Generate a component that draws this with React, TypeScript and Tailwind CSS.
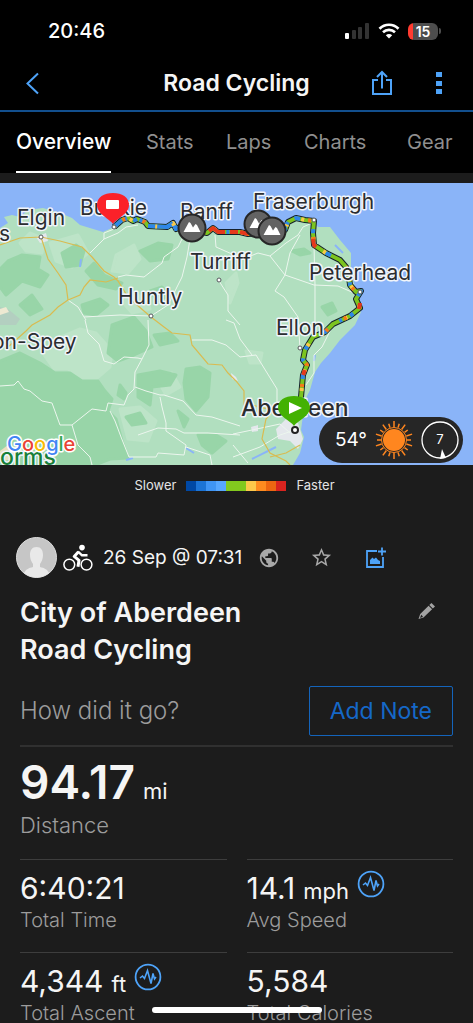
import React from "react";
import { MdPublic, MdStarBorder } from "react-icons/md";

const TABS = ["Overview", "Stats", "Laps", "Charts", "Gear"];

const LEGEND = [
  "bg-[#0048a4]",
  "bg-[#1c74d6]",
  "bg-[#3f95f5]",
  "bg-[#57a7ff]",
  "bg-[#82c91e]",
  "bg-[#82c91e]",
  "bg-[#fcc84a]",
  "bg-[#fd8b1f]",
  "bg-[#ec6611]",
  "bg-[#d9241f]",
];

const STATS = [
  { label: "Total Time", value: "6:40:21" },
  { label: "Avg Speed", value: "14.1", unit: "mph", insight: true },
  { label: "Total Ascent", value: "4,344", unit: "ft", insight: true },
  { label: "Total Calories", value: "5,584" },
];

const ROUTE =
  "M114 44 L122 37 L128 35 L133 38 L137 36 L145 39 L148 43 L167 44 L173 40 L176 46 L182 43 L192 46 L207 50 L213 45 L218 49 L240 49 L248 51 L266 50 L285 47 L288 39 L296 35 L305 37 L314 38 L313 50 L314 62 L326 70 L340 77 L346 84 L349 94 L350 102 L356 109 L361 108 L356 116 L360 125 L350 133 L333 141 L325 149 L313 154 L305 167 L303 177 L307 182 L303 192 L301 214 L300 225";

const FOREST = [
  "M0 178 L20 170 L40 180 L55 190 L70 190 L82 198 L98 198 L105 208 L112 216 L108 228 L116 236 L122 258 L128 275 L110 276 L95 282 L0 282Z",
  "M8 78 L22 72 L40 74 L38 86 L48 92 L40 104 L22 98 L6 112 L0 104 L0 86Z",
  "M62 70 L76 62 L84 68 L80 82 L66 84Z",
  "M86 88 L94 80 L104 92 L122 100 L116 106 L98 102Z",
  "M140 68 L158 60 L172 62 L168 76 L150 78Z",
  "M82 122 L100 116 L108 122 L96 132 L84 130Z",
  "M112 142 L134 134 L146 148 L152 164 L134 172 L118 178 L108 170Z",
  "M154 152 L170 150 L178 158 L160 162Z",
  "M138 192 L160 188 L176 192 L170 202 L152 204 L150 222 L138 214Z",
  "M186 186 L200 184 L210 190 L208 214 L196 228 L186 216 L184 200Z",
  "M120 202 L126 210 L124 216 L118 212Z",
  "M126 234 L140 230 L146 240 L132 242Z",
  "M198 252 L216 252 L226 258 L212 270 L202 262Z",
  "M178 228 L188 236 L184 244Z",
  "M150 108 L162 104 L170 112 L158 118Z",
  "M292 68 L304 66 L310 70 L300 72Z",
  "M322 124 L332 120 L336 128 L328 132Z",
  "M20 122 L32 112 L42 126 L30 132Z",
];

const PALE = [
  "M52 158 L80 146 L96 150 L112 168 L110 184 L96 196 L82 196 L68 186 L54 186 L44 172Z",
  "M50 60 L78 52 L88 70 L72 84 L56 78Z",
  "M20 60 L30 50 L44 56 L42 70 L26 68Z",
  "M120 226 L140 224 L156 238 L148 258 L128 256Z",
  "M156 194 L172 190 L180 204 L166 212Z",
  "M116 72 L134 62 L140 76 L128 90 L112 88Z",
  "M238 100 L236 90 L226 100 L230 120Z",
  "M120 116 L146 112 L150 126 L132 130Z",
  "M246 168 L262 170 L260 180 L250 180Z",
];

const MINOR_ROADS = [
  "M0 203 L14 202 L18 198 L24 206 L30 208 L42 218 L52 220 L60 242 L72 242 L82 234 L92 226 L106 228 L108 220 L124 222 L128 212 L134 206 L135 189 L142 176 L149 162 L148 137",
  "M85 137 L88 150 L99 161 L104 178 L114 181 L124 174 L138 175 L142 176",
  "M135 204 L146 208 L160 212 L164 212 L183 218 L196 232 L212 234 L240 243",
  "M72 242 L78 262 L90 274 L92 282",
  "M110 228 L115 238 L121 254 L129 274 L156 274 L158 270 L184 272 L186 262 L166 248 L166 240 L162 224 L160 214",
  "M138 252 L158 245 L176 246 L184 250 L208 250 L240 252",
  "M186 264 L210 272 L212 282",
  "M68 117 L78 124 L84 134 L86 137",
  "M84 134 L120 132 L151 133 L168 122 L182 94 L187 74 L190 56",
  "M118 94 L126 92 L144 94 L162 80 L164 74 L178 64 L184 52",
  "M114 46 L104 50 L104 56 L90 70",
  "M104 56 L118 50 L126 44 L138 42",
  "M219 98 L228 112 L228 128 L240 142",
  "M215 52 L216 64 L232 71 L248 74 L258 70 L270 73 L285 92 L275 108 L284 114 L298 134 L300 166",
  "M270 73 L286 60 L298 52 L303 44 L312 40",
  "M285 92 L290 70 L300 52",
  "M285 92 L314 102 L338 103 L354 110",
  "M314 62 L315 102 L315 142",
  "M192 157 L212 157 L226 162 L240 174 L256 172 L277 206 L277 224",
  "M226 137 L234 140 L240 156 L252 172",
  "M333 142 L322 164 L314 172 L314 190 L306 202",
  "M233 251 L252 247 L280 241 L290 250",
  "M233 274 L260 264 L280 252 L292 248",
  "M233 262 L248 280",
];

const MAIN_ROADS = [
  "M0 62 L20 55 L41 54 L60 58 L82 64 L92 74 L104 88 L114 94 L118 98 L128 114 L144 128 L151 134 L164 144 L172 150 L190 152 L192 162 L208 181 L222 182 L228 190 L236 198 L244 208 L244 222 L260 230",
  "M41 54 L48 76 L58 90 L66 102 L68 117 L58 124 L50 132 L32 142 L26 148 L8 164",
  "M68 117 L80 112 L84 104 L90 97 L106 99 L118 95",
  "M275 225 L266 236 L262 256 L270 270 L286 278 L290 282",
  "M270 274 L286 270 L300 262",
  "M252 222 L268 226 L280 220",
];

const TOWNS = [
  [41, 54],
  [114, 44],
  [219, 97],
  [151, 133],
  [314, 37],
  [360, 109],
  [300, 165],
];

const LABELS = [
  { text: "Elgin", x: 17, y: 42 },
  { text: "s", x: -1, y: 58 },
  { text: "Buckie", x: 80, y: 32 },
  { text: "Banff", x: 180, y: 36 },
  { text: "Fraserburgh", x: 253, y: 26 },
  { text: "Turriff", x: 190, y: 86 },
  { text: "Peterhead", x: 309, y: 97 },
  { text: "Huntly", x: 118, y: 121 },
  { text: "Ellon", x: 276, y: 152 },
  { text: "on-Spey", x: -8, y: 166 },
];

function SummitMarker({ x, y }: { x: number; y: number }) {
  return (
    <g transform={`translate(${x} ${y})`}>
      <circle r="13.5" fill="#636363" stroke="#262626" strokeWidth="2" />
      <path d="M-8.5 4 L-3 -6 L-1.5 -5 L1 -0.5 L3.5 -4 L5 -3 L8.5 4Z" fill="#fff" />
    </g>
  );
}

function RouteMap() {
  return (
    <svg
      viewBox="0 0 473 282"
      preserveAspectRatio="xMidYMid slice"
      className="block h-[282px] w-full font-[Inter,sans-serif]"
      role="img"
      aria-label="Route map"
    >
      <rect width="473" height="282" fill="#8ab4f8" />
      <path
        d="M0 45 L8 40 L4 34 L12 32 L20 34 L28 27 L43 25 L60 30 L72 35 L80 42 L103 49 L114 44 L128 34 L145 35 L150 40 L172 42 L190 40 L205 46 L240 47 L248 50 L283 46 L289 35 L313 36 L318 44 L330 44 L340 57 L351 70 L351 89 L355 104 L362 109 L358 118 L361 129 L355 142 L340 157 L330 170 L321 180 L315 189 L310 207 L305 217 L301 247 L304 254 L300 270 L293 282 L0 282Z"
        fill="#b1dfbf"
      />
      <g fill="#bde4c8" stroke="#bde4c8" strokeWidth="3" strokeLinejoin="round">
        {PALE.map((d) => (
          <path key={d} d={d} />
        ))}
      </g>
      <g fill="#98d5a8" stroke="#98d5a8" strokeWidth="3" strokeLinejoin="round">
        {FOREST.map((d) => (
          <path key={d} d={d} />
        ))}
      </g>
      <path d="M0 124 L8 126 L20 136 L16 142 L0 142Z" fill="#b3cfc0" />
      <path d="M0 126 L6 124 L9 129 L0 132Z" fill="#eee9d2" />
      <path d="M0 268 L8 262 L22 266 L20 276 L0 278Z" fill="#eadfc0" />
      <path
        d="M335 62 L343 70 M315 172 L314 178 M252 276 L276 264 M186 265 L194 270 M126 277 L133 275 M81 76 L80 84"
        stroke="#8ab4f8"
        strokeWidth="2"
      />
      <path
        d="M36 54 L46 50 L48 58 L40 60Z M276 246 L286 236 L298 240 L303 256 L298 266 L290 258 L278 256Z M251 244 L258 242 L258 248 L252 249Z M231 190 L236 194 L238 198 L232 196Z"
        fill="#e4e8ec"
      />
      <g fill="none" stroke="#ecf6ee" strokeWidth="1">
        {MINOR_ROADS.map((d) => (
          <path key={d} d={d} />
        ))}
      </g>
      <g fill="none" stroke="#d9bb50" strokeWidth="1.2">
        {MAIN_ROADS.map((d) => (
          <path key={d} d={d} />
        ))}
      </g>

      {/* pace-coloured track: one base line with the other bands dashed over it */}
      <g fill="none" strokeLinejoin="round">
        <path d={ROUTE} stroke="#15202b" strokeWidth="6" />
        <path d={ROUTE} stroke="#7cc41f" strokeWidth="4" />
        <path
          d="M114 44 L122 37 M133 38 L137 36 M148 43 L167 44 L173 40 L176 46 L182 43 M283 47 L288 39"
          stroke="#2f87e8"
          strokeWidth="4"
        />
        <path d={ROUTE} stroke="#2f87e8" strokeWidth="4" strokeDasharray="4 9 3 14 6 22" />
        <path d={ROUTE} stroke="#fcc84a" strokeWidth="4" strokeDasharray="2 17 3 26" />
        <path d={ROUTE} stroke="#f4791a" strokeWidth="4" strokeDasharray="0 11 3 19 3 33" />
        <path
          d="M209 48 L213 45 L218 49 L225 49 M230 49 L238 49 M240 49 L248 51 M313 56 L314 62 L316 64 M360 120 L359 126 M305 187 L303 192"
          stroke="#e5391c"
          strokeWidth="4"
        />
      </g>

      <g
        fill="#2b2d31"
        stroke="#f1f5fa"
        strokeWidth="3"
        strokeLinejoin="round"
        paintOrder="stroke"
        fontSize="21"
      >
        {LABELS.map((l) => (
          <text key={l.text} x={l.x} y={l.y}>
            {l.text}
          </text>
        ))}
        <text x="241" y="233" fontSize="23" fontWeight="500">
          Aberdeen
        </text>
        <text x="0" y="282" fontSize="23" fontWeight="500" fill="#188038">
          orms
        </text>
      </g>

      <g fill="#fff" stroke="#55585c" strokeWidth="1">
        {TOWNS.map(([x, y]) => (
          <circle key={x} cx={x} cy={y} r="2" />
        ))}
        <circle cx="295" cy="247" r="3" stroke="#222" strokeWidth="2" />
      </g>

      <SummitMarker x={192} y={45} />
      <SummitMarker x={258} y={41} />
      <SummitMarker x={272} y={48} />

      {/* finish and start pins */}
      <path d="M113 41 C110 36 97 31 97 22 C97 14 104 10 113 10 C122 10 129 14 129 22 C129 31 116 36 113 41Z" fill="#fb2129" />
      <rect x="106" y="17" width="13" height="9" rx="1" fill="#fff" />
      <path d="M294 243 C291 238 278 233 278 225 C278 217 285 213 294 213 C303 213 310 217 310 225 C310 233 297 238 294 243Z" fill="#43b102" />
      <path d="M289 219 L302 225 L289 231Z" fill="#fff" />

      <text x="7" y="268" fontSize="20" fontWeight="500" stroke="#fff" strokeWidth="3" paintOrder="stroke" strokeLinejoin="round">
        <tspan fill="#4285f4">G</tspan>
        <tspan fill="#ea4335">o</tspan>
        <tspan fill="#fbbc05">o</tspan>
        <tspan fill="#4285f4">g</tspan>
        <tspan fill="#34a853">l</tspan>
        <tspan fill="#ea4335">e</tspan>
      </text>
    </svg>
  );
}

function SunIcon() {
  const rays = Array.from({ length: 20 }, (_, i) => i * 18);
  return (
    <svg width="38" height="38" viewBox="-19 -19 38 38" aria-hidden="true">
      <circle r="11" fill="#ff861f" />
      <circle r="12.5" fill="none" stroke="#ff861f" strokeWidth="1" />
      {rays.map((deg, i) => (
        <path
          key={deg}
          d={i % 2 ? "M0 -13 V-17" : "M0 -13 V-19"}
          stroke="#ff861f"
          strokeWidth="1.5"
          transform={`rotate(${deg})`}
        />
      ))}
    </svg>
  );
}

function WeatherPill() {
  return (
    <div className="absolute right-2.5 bottom-0.5 flex h-[46px] items-center gap-2 rounded-full bg-[#262626] pr-1 pl-4 text-white">
      <span className="text-[19px]">54°</span>
      <SunIcon />
      <svg
        width="38"
        height="38"
        viewBox="0 0 38 38"
        className="font-[Inter,sans-serif]"
        role="img"
        aria-label="Wind 7"
      >
        <circle cx="19" cy="19" r="18" fill="none" stroke="#fff" strokeWidth="1.3" />
        <path d="M21 28 L25 37 L19 38Z" fill="#fff" />
        <text x="19" y="23" fontSize="13" textAnchor="middle" fill="#fff">
          7
        </text>
      </svg>
    </div>
  );
}

function CyclistIcon() {
  return (
    <svg width="30" height="28" viewBox="0 0 30 28" fill="none" stroke="#fff" aria-hidden="true">
      <circle cx="6.3" cy="20.6" r="5.4" strokeWidth="1.5" />
      <circle cx="23.5" cy="20.6" r="5.4" strokeWidth="1.5" />
      <circle cx="19" cy="3.6" r="2.8" fill="#fff" stroke="none" />
      <path d="M15.5 7.8 L11.2 12.4 L16 16.3 L15 22.8" strokeWidth="3" strokeLinejoin="round" />
      <path d="M15 7.5 L19 11.3 H24.5" strokeWidth="2.4" strokeLinejoin="round" />
    </svg>
  );
}

function InsightIcon() {
  return (
    <svg width="28" height="28" viewBox="0 0 28 28" fill="none" stroke="#4ea3f8" aria-hidden="true">
      <circle cx="14" cy="14" r="12.4" strokeWidth="1.8" />
      <path d="M6 15 L8.5 13 L10.5 15.5 L13.5 7.5 L17 20.5 L19 10.5 L20.5 16 L22 14" strokeWidth="1.6" />
    </svg>
  );
}

function StatusBar() {
  return (
    <div className="flex h-[58px] items-center justify-between pt-1 pr-8 pl-12 text-white">
      <span className="text-xl font-medium">20:46</span>
      <div className="flex items-center gap-2">
        <svg width="25" height="16" viewBox="0 0 25 16" aria-hidden="true">
          <rect x="0" y="10" width="4" height="6" rx="1" fill="#fff" />
          <rect x="7" y="7" width="4" height="9" rx="1" fill="#333" />
          <rect x="13" y="4" width="4" height="12" rx="1" fill="#333" />
          <rect x="20" y="0" width="4" height="16" rx="1" fill="#333" />
        </svg>
        <svg width="22" height="16" viewBox="0 0 22 16" fill="none" stroke="#fff" aria-hidden="true">
          <path d="M1.5 5.8 C6.8 0.4 15.2 0.4 20.5 5.8" strokeWidth="2.7" />
          <path d="M5 9.3 C8.4 6 13.6 6 17 9.3" strokeWidth="2.6" />
          <path d="M11 15.5 L7.8 12.2 C9.6 10.5 12.4 10.5 14.2 12.2Z" fill="#fff" stroke="none" />
        </svg>
        <div className="flex items-center">
          <div className="h-[17px] w-[30px] overflow-hidden rounded-md bg-[linear-gradient(to_right,#ff3b30_5px,#4d4d4d_5px)] text-center text-sm leading-[17px] font-semibold">
            15
          </div>
          <span className="ml-px h-1.5 w-0.5 rounded-r-full bg-[#4d4d4d]" />
        </div>
      </div>
    </div>
  );
}

export default function App() {
  return (
    <div className="flex h-screen flex-col overflow-hidden bg-[#1c1c1c] font-[Inter,sans-serif] text-[#f5f5f5]">
      <header className="bg-black">
        <StatusBar />

        {/* Title bar */}
        <div className="flex h-[54px] items-center border-b-2 border-[#124f8e] px-6 pb-0.5 text-[#4ea3f8]">
          <div className="flex flex-1">
            <button type="button" aria-label="Back">
              <svg width="16" height="24" viewBox="0 0 16 24" fill="none" stroke="currentColor" strokeWidth="2">
                <path d="M14 2.5 L3.5 12.5 L14 22.5" />
              </svg>
            </button>
          </div>
          <h1 className="text-[23px] font-semibold text-[#f5f5f5]">Road Cycling</h1>
          <div className="flex flex-1 items-center justify-end gap-9">
            <button type="button" aria-label="Share">
              <svg width="22" height="26" viewBox="0 0 22 26" fill="none" stroke="currentColor" strokeWidth="2">
                <path d="M7 10 H2 V24 H20 V10 H15 M11 18.5 V2.5 M6 7 L11 2 L16 7" />
              </svg>
            </button>
            <button type="button" aria-label="More">
              <svg width="20" height="24" viewBox="0 0 20 24" fill="currentColor">
                <path d="M7 1 h6 v5 h-6Z M7 10 h6 v5 h-6Z M7 18 h6 v5 h-6Z" />
              </svg>
            </button>
          </div>
        </div>

        {/* Tabs */}
        <nav className="px-4" aria-label="Activity sections">
          <ul className="grid h-[61px] grid-cols-[130fr_80fr_78fr_103fr_50fr] text-xl">
            {TABS.map((tab, i) => (
              <li key={tab} className="flex">
                <a
                  href={`#${tab.toLowerCase()}`}
                  className={`flex items-center border-b-2 ${
                    i === 0
                      ? "border-white text-[21px] font-medium text-white"
                      : "border-transparent text-[#8f8f8f]"
                  }`}
                  aria-current={i === 0 ? "page" : undefined}
                >
                  {tab}
                </a>
              </li>
            ))}
          </ul>
        </nav>
      </header>

      <main>
        <div className="relative mt-2.5">
          <RouteMap />
          <WeatherPill />
        </div>

        {/* Pace legend */}
        <div className="flex h-[42px] items-center justify-center gap-2.5 pr-1 text-[13px] text-[#e4e4e4]">
          <span>Slower</span>
          <div className="flex h-2.5">
            {LEGEND.map((color, i) => (
              <span key={i} className={`w-2.5 ${color}`} />
            ))}
          </div>
          <span>Faster</span>
        </div>

        {/* Activity info */}
        <div className="mt-7 flex h-[45px] items-center px-4">
          <svg width="41" height="41" viewBox="0 0 41 41" aria-hidden="true">
            <circle cx="20.5" cy="20.5" r="20" fill="#c6c6c6" stroke="#dcdcdc" />
            <path d="M20.5 10 C25 10 27 13 27 18 C27 22 25.5 25 24 27 V30 C28 31 31 32 33 36 A20 20 0 0 1 8 36 C10 32 13 31 17 30 V27 C15.5 25 14 22 14 18 C14 13 16 10 20.5 10Z" fill="#e9e9e9" />
          </svg>
          <span className="ml-1.5">
            <CyclistIcon />
          </span>
          <span className="ml-2.5 pt-0.5 text-[19px]">26 Sep @ 07:31</span>
          <button type="button" className="ml-4 text-[#a8a8a8]" aria-label="Privacy">
            <MdPublic size={22} />
          </button>
          <button type="button" className="ml-[30px] text-[#a8a8a8]" aria-label="Favourite">
            <MdStarBorder size={23} />
          </button>
          <button type="button" className="ml-8 text-[#4ea3f8]" aria-label="Add photo">
            <svg width="22" height="22" viewBox="0 0 22 22" fill="none" stroke="currentColor" strokeWidth="1.8">
              <path d="M12 4 H2 V20 H18 V10 M17 0.5 V8.5 M13 4.5 H21" />
              <path d="M5 17 V13 L7.5 10.5 L9 12 L11 10.5 L13 13 L15 14 V17Z" fill="currentColor" stroke="none" />
            </svg>
          </button>
        </div>

        <section className="px-5">
          <div className="mt-3.5 flex items-start justify-between pr-4">
            <h2 className="w-64 text-[27px] leading-[37px] font-semibold">
              City of Aberdeen Road Cycling
            </h2>
            <button type="button" className="mt-2 text-[#a3a3a3]" aria-label="Edit name">
              <svg width="20" height="18" viewBox="0 0 20 18" fill="currentColor">
                <path d="M14.5 1 L18 4.5 L15.8 6.6 L12.3 3.1Z" />
                <path d="M11.6 3.8 L15.1 7.3 L6.5 15.5 L1.5 17 L3.2 12Z M4.3 12.8 L3 16 L6 14.7Z" fillRule="evenodd" />
              </svg>
            </button>
          </div>

          <div className="mt-[18px] flex items-center justify-between border-b-2 border-[#303030] pb-[9px]">
            <p className="text-2xl font-light text-[#9c9c9c]">How did it go?</p>
            <button
              type="button"
              className="h-[50px] rounded-xs border border-[#1464bb] px-5 text-[23px] text-[#1568c8]"
            >
              Add Note
            </button>
          </div>

          {/* Distance */}
          <div className="mt-2 mb-5">
            <div className="flex items-baseline gap-2">
              <span className="text-[46px] leading-[54px] font-semibold">94.17</span>
              <span className="text-[22px]">mi</span>
            </div>
            <div className="pt-0.5 text-[22px] leading-7 font-light text-[#9c9c9c]">Distance</div>
          </div>

          <div className="grid grid-cols-2 gap-x-5">
            {STATS.map((stat) => (
              <div key={stat.label} className="h-[93px] border-t border-[#3d3d3d] pt-2">
                <div className="flex h-10 items-baseline">
                  <span className="text-[30px] leading-10">{stat.value}</span>
                  {stat.unit && <span className="ml-2 text-[22px]">{stat.unit}</span>}
                  {stat.insight && (
                    <button type="button" className="mt-0.5 ml-2 self-start" aria-label={`${stat.label} chart`}>
                      <InsightIcon />
                    </button>
                  )}
                </div>
                <div className="text-xl leading-6 font-light text-[#9c9c9c]">{stat.label}</div>
              </div>
            ))}
          </div>
        </section>
      </main>

      {/* Home indicator */}
      <div className="fixed bottom-2.5 left-1/2 h-1.5 w-[170px] -translate-x-1/2 rounded-full bg-white" />
    </div>
  );
}
